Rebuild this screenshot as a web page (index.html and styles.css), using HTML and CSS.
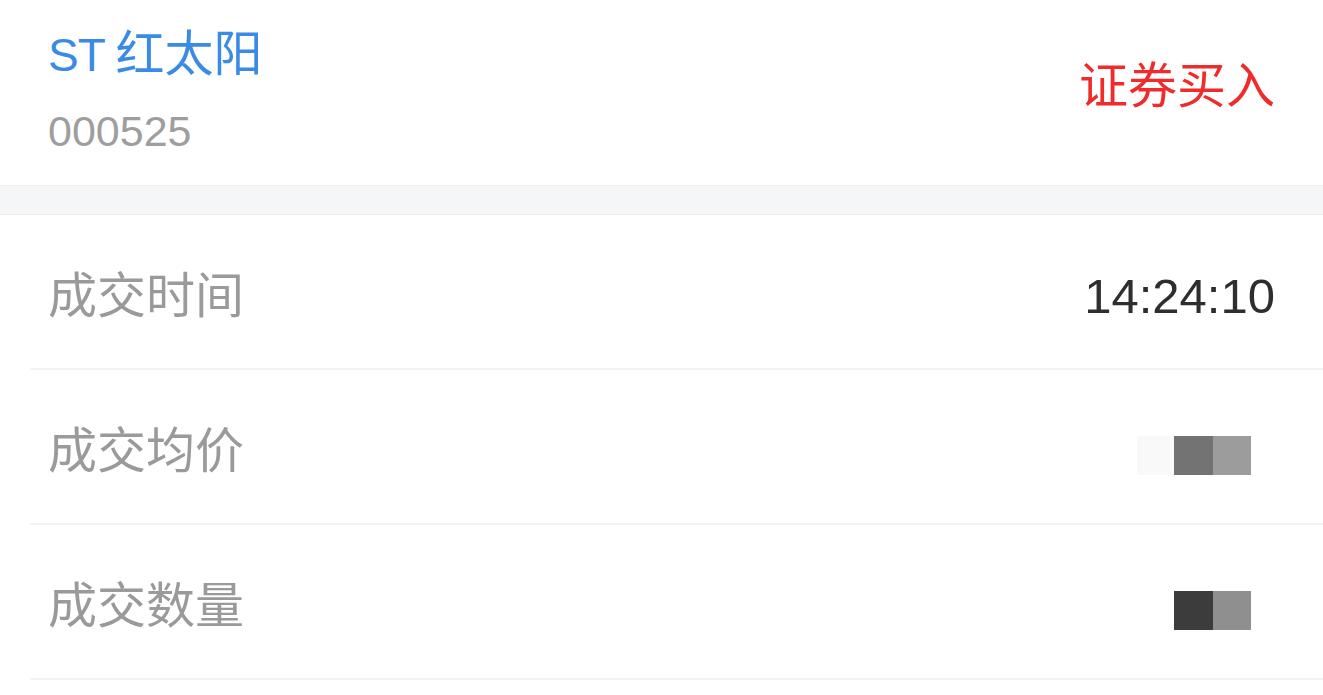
FILE: index.html
```html
<!DOCTYPE html>
<html lang="zh-CN">
<head>
<meta charset="utf-8">
<title>成交详情</title>
<link rel="stylesheet" href="styles.css">
</head>
<body>
<div class="page">
  <header class="header">
    <div class="stock">
      <div class="stock-name"><span class="stock-prefix">ST</span> 红太阳</div>
      <div class="stock-code">000525</div>
    </div>
    <div class="trade-type">证券买入</div>
  </header>
  <div class="band"></div>
  <ul class="rows">
    <li class="row">
      <span class="label">成交时间</span>
      <span class="value">14:24:10</span>
    </li>
    <li class="row">
      <span class="label">成交均价</span>
      <span class="mosaic">
        <span class="cell cell-faint"></span>
        <span class="cell cell-mid"></span>
        <span class="cell cell-light"></span>
      </span>
    </li>
    <li class="row">
      <span class="label">成交数量</span>
      <span class="mosaic">
        <span class="cell cell-dark"></span>
        <span class="cell cell-gray"></span>
      </span>
    </li>
  </ul>
</div>
</body>
</html>
```

FILE: styles.css
```css
* {
  box-sizing: border-box;
}

html, body {
  margin: 0;
  padding: 0;
  background: #ffffff;
}

body {
  font-family: "Liberation Sans", "Noto Sans CJK SC", sans-serif;
  width: 1323px;
  height: 695px;
  overflow: hidden;
}

.page {
  display: flex;
  flex-direction: column;
}

.header {
  height: 185px;
  padding: 0 48px;
  display: flex;
  justify-content: space-between;
  align-items: flex-start;
}

.stock {
  display: flex;
  flex-direction: column;
  padding-top: 24px;
  gap: 22px;
}

.stock-name {
  font-size: 49px;
  line-height: 60px;
  color: #3a8be6;
  white-space: nowrap;
  word-spacing: -3px;
}

.stock-prefix {
  font-size: 46px;
  letter-spacing: -1px;
}

.stock-code {
  font-size: 43px;
  line-height: 48px;
  color: #9e9e9e;
}

.trade-type {
  margin-top: 56px;
  font-size: 49px;
  line-height: 60px;
  color: #ef2b2b;
  white-space: nowrap;
}

.band {
  height: 30px;
  background: #f5f6f8;
  border-top: 1px solid #eeeff2;
  border-bottom: 1px solid #ebecef;
}

.rows {
  list-style: none;
  margin: 0;
  padding: 0;
}

.row {
  height: 155px;
  margin-left: 30px;
  padding: 8px 48px 0 18px;
  display: flex;
  justify-content: space-between;
  align-items: center;
  border-bottom: 2px solid #f3f3f3;
}

.label {
  font-size: 49px;
  line-height: 60px;
  color: #9a9a9a;
  white-space: nowrap;
}

.value {
  font-size: 49px;
  line-height: 60px;
  color: #2e2e2e;
}

.mosaic {
  display: flex;
  margin-right: 24px;
  margin-top: 10px;
}

.cell {
  display: block;
  width: 38px;
  height: 39px;
}

.cell-faint { background: #f9f9f9; width: 37px; }
.cell-mid { background: #737373; width: 39px; }
.cell-light { background: #9c9c9c; }
.cell-dark { background: #3c3c3c; width: 39px; }
.cell-gray { background: #8f8f8f; }
```
